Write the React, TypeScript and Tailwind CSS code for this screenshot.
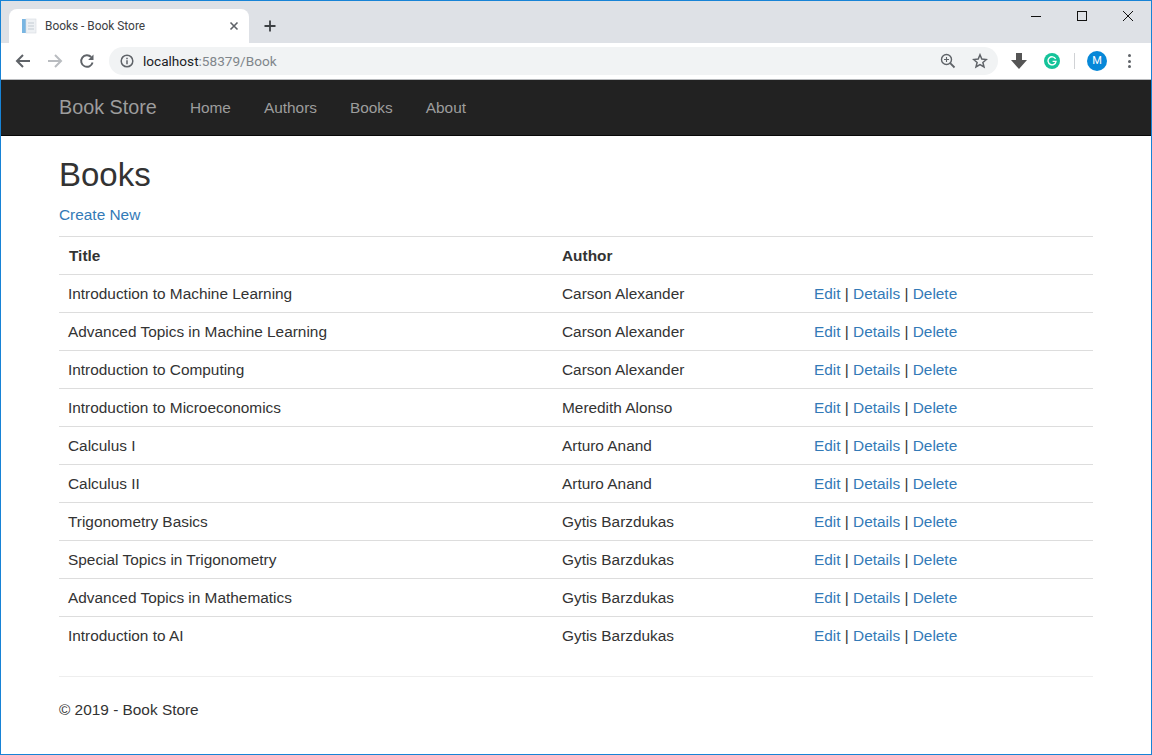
const books = [
  ['Introduction to Machine Learning', 'Carson Alexander'],
  ['Advanced Topics in Machine Learning', 'Carson Alexander'],
  ['Introduction to Computing', 'Carson Alexander'],
  ['Introduction to Microeconomics', 'Meredith Alonso'],
  ['Calculus I', 'Arturo Anand'],
  ['Calculus II', 'Arturo Anand'],
  ['Trigonometry Basics', 'Gytis Barzdukas'],
  ['Special Topics in Trigonometry', 'Gytis Barzdukas'],
  ['Advanced Topics in Mathematics', 'Gytis Barzdukas'],
  ['Introduction to AI', 'Gytis Barzdukas'],
];

function TabStrip() {
  return (
    <div className="h-[42px] bg-[#dee1e6] flex items-end pl-[8px] shrink-0 relative">
      <div className="w-[240px] h-[34px] bg-white rounded-t-[8px] flex items-center pl-[12px] pr-[9px]">
        <svg width="16" height="16" viewBox="0 0 16 16">
          <rect x="1" y="1" width="4" height="14" fill="#7ab6e2" />
          <rect x="5" y="1" width="10" height="14" fill="#eef1f4" stroke="#d5dbe0" strokeWidth="0.6" />
          <path d="M7 5h6M7 8h6M7 11h6" stroke="#c3cbd2" strokeWidth="1" />
        </svg>
        <span className="ml-[8px] flex-1 pt-[2px] text-[11.9px] text-[#3c4043] font-['Roboto',sans-serif]">Books - Book Store</span>
        <svg width="10" height="10" viewBox="0 0 10 10" className="mr-[1px]">
          <path d="M1.5 1.5l7 7M8.5 1.5l-7 7" stroke="#5f6368" strokeWidth="1.6" />
        </svg>
      </div>
      <svg width="14" height="14" viewBox="0 0 14 14" className="ml-[14px] mb-[10px]">
        <path d="M7 1.5v11M1.5 7h11" stroke="#3c4043" strokeWidth="1.8" />
      </svg>
      <div className="absolute right-0 top-0 flex">
        <div className="w-[46px] h-[30px] flex items-center justify-center">
          <svg width="10" height="10" viewBox="0 0 10 10"><path d="M0 5.5h10" stroke="#111" strokeWidth="1" /></svg>
        </div>
        <div className="w-[46px] h-[30px] flex items-center justify-center">
          <svg width="10" height="10" viewBox="0 0 10 10"><rect x="0.5" y="0.5" width="9" height="9" fill="none" stroke="#111" strokeWidth="1" /></svg>
        </div>
        <div className="w-[46px] h-[30px] flex items-center justify-center">
          <svg width="10" height="10" viewBox="0 0 10 10"><path d="M0 0l10 10M10 0L0 10" stroke="#111" strokeWidth="1" /></svg>
        </div>
      </div>
    </div>
  );
}

function Toolbar() {
  return (
    <div className="h-[37px] bg-white border-b border-[#b8babd] flex items-center shrink-0 font-['Roboto',sans-serif]">
      <svg width="16" height="16" viewBox="0 0 16 16" className="ml-[14px]">
        <path d="M15 8H2M8 2L2 8l6 6" fill="none" stroke="#5f6368" strokeWidth="2" />
      </svg>
      <svg width="16" height="16" viewBox="0 0 16 16" className="ml-[16px]">
        <path d="M1 8h13M8 2l6 6-6 6" fill="none" stroke="#b9bcc0" strokeWidth="2" />
      </svg>
      <svg width="16" height="16" viewBox="0 0 16 16" className="ml-[16px]">
        <path d="M13.6 9.5A5.8 5.8 0 1 1 12.2 4" fill="none" stroke="#5f6368" strokeWidth="1.9" />
        <path d="M14.5 1.5v5.4H9.1z" fill="#5f6368" />
      </svg>
      <div className="ml-[14px] w-[889px] h-[28px] rounded-full bg-[#f1f3f4] flex items-center pl-[11px] pr-[10px]">
        <svg width="14" height="14" viewBox="0 0 14 14">
          <circle cx="7" cy="7" r="5.8" fill="none" stroke="#5f6368" strokeWidth="1.5" />
          <path d="M7 6.2v4M7 3.8v1.4" stroke="#5f6368" strokeWidth="1.5" />
        </svg>
        <span className="ml-[9px] flex-1 text-[13.6px] leading-[20px] text-[#80868b]">
          <span className="text-[#202124]">localhost</span>:58379/Book
        </span>
        <svg width="16" height="16" viewBox="0 0 16 16">
          <circle cx="6.5" cy="6.5" r="5" fill="none" stroke="#5f6368" strokeWidth="1.4" />
          <path d="M10.2 10.2l4.3 4.3" stroke="#5f6368" strokeWidth="1.8" />
          <path d="M6.5 4v5M4 6.5h5" stroke="#5f6368" strokeWidth="1.1" />
        </svg>
        <svg width="16" height="16" viewBox="0 0 16 16" className="ml-[16px]">
          <path d="M8 1.8l1.8 4.3 4.6.4-3.5 3 1.1 4.5L8 11.6 4 14l1.1-4.5-3.5-3 4.6-.4z" fill="none" stroke="#5f6368" strokeWidth="1.5" />
        </svg>
      </div>
      <svg width="16" height="16" viewBox="0 0 16 16" className="ml-[13px]">
        <path d="M5 0h6v7h5l-8 9-8-9h5z" fill="#555" />
      </svg>
      <div className="ml-[17px] w-[16px] h-[16px] rounded-full bg-[#15c39a] flex items-center justify-center">
        <svg width="10" height="10" viewBox="0 0 10 10">
          <path d="M8.6 3A4 4 0 1 0 9 5.4H5.6" fill="none" stroke="#fff" strokeWidth="1.4" />
        </svg>
      </div>
      <div className="ml-[14px] w-px h-[16px] bg-[#d0d2d5]" />
      <div className="ml-[12px] w-[20px] h-[20px] rounded-full bg-[#0788d8] text-white text-[11px] flex items-center justify-center">M</div>
      <div className="ml-[21px] flex flex-col gap-[2.5px]">
        <span className="w-[3px] h-[3px] rounded-full bg-[#5f6368]" />
        <span className="w-[3px] h-[3px] rounded-full bg-[#5f6368]" />
        <span className="w-[3px] h-[3px] rounded-full bg-[#5f6368]" />
      </div>
    </div>
  );
}

function Navbar() {
  return (
    <div className="h-[56px] bg-[#222222] border-b border-[#080808] flex items-center pl-[58px] shrink-0 text-[#9d9d9d]">
      <span className="text-[19.8px]">Book Store</span>
      <span className="ml-[33px] text-[15.4px]">Home</span>
      <span className="ml-[33px] text-[15.4px]">Authors</span>
      <span className="ml-[33px] text-[15.4px]">Books</span>
      <span className="ml-[33px] text-[15.4px]">About</span>
    </div>
  );
}

function BookTable() {
  return (
    <div className="mt-[10px]">
      <div className="grid grid-cols-[503px_252px_1fr] h-[38px] items-center border-t border-[#dddddd] font-bold text-[#333333]">
        <div className="pl-[10px]">Title</div>
        <div>Author</div>
        <div />
      </div>
      {books.map(([title, author]) => (
        <div key={title} className="grid grid-cols-[503px_252px_1fr] h-[38px] items-center border-t border-[#dddddd]">
          <div className="pl-[9px]">{title}</div>
          <div>{author}</div>
          <div>
            <a className="text-[#337ab7]">Edit</a> | <a className="text-[#337ab7]">Details</a> | <a className="text-[#337ab7]">Delete</a>
          </div>
        </div>
      ))}
    </div>
  );
}

export default function App() {
  return (
    <div className="w-[1152px] h-[755px] border border-[#1783d6] flex flex-col overflow-hidden bg-white font-['Liberation_Sans',Arial,sans-serif] text-[15.4px] text-[#333333]">
      <TabStrip />
      <Toolbar />
      <Navbar />
      <div className="ml-[58px] w-[1034px]">
        <h1 className="mt-[21px] text-[33px] leading-[36px]">Books</h1>
        <a className="block mt-[11px] leading-[22px] text-[#337ab7]">Create New</a>
        <BookTable />
        <div className="mt-[22px] border-t border-[#eeeeee] pt-[22px] leading-[22px]">© 2019 - Book Store</div>
      </div>
    </div>
  );
}
